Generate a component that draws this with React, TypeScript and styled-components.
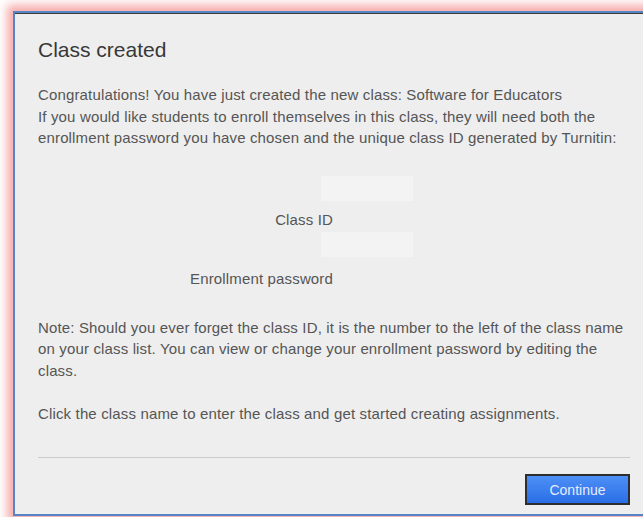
import React from "react";
import styled, { createGlobalStyle } from "styled-components";

const GlobalStyle = createGlobalStyle`
    html, body {
        margin: 0;
        padding: 0;
        background: #ffffff;
        overflow: hidden;
    }
    body {
        font-family: "Liberation Sans", Arial, sans-serif;
    }
`;

/**
 * Dialog frame
 */
const Page = styled.div`
    padding: 11px 0 0 13px;
    height: 517px;
    box-sizing: border-box;
`;

const Dialog = styled.div`
    width: 592px;
    padding: 25px 23px 9px 23px;
    background: #eeeeee;
    border: 2px solid #5685c6;
    box-shadow: inset 0 1px 0 #3c3c3c, 0 0 9px 6px rgba(243, 150, 150, 0.8);
    color: #555555;
`;

const Title = styled.h2`
    margin: 0 0 22px 0;
    font-size: 21px;
    line-height: 24px;
    font-weight: normal;
    color: #383838;
`;

const Text = styled.p`
    margin: 0;
    font-size: 15px;
    line-height: 21.5px;
    letter-spacing: 0.15px;
`;

/**
 * Class ID / password fields
 */
const Fields = styled.div`
    display: flex;
    flex-direction: column;
    margin: 27px 0 25px 0;
`;

const Field = styled.div<{ gap: number }>`
    display: flex;
    flex-direction: column;
    gap: ${(p) => p.gap}px;
    margin-bottom: 2px;
`;

const ValueBox = styled.div`
    width: 92px;
    height: 25px;
    margin-left: 283px;
    background: #f3f3f3;
`;

const FieldLabel = styled.div`
    width: 295px;
    text-align: right;
    font-size: 15px;
    line-height: 21.5px;
    letter-spacing: 0.15px;
`;

/**
 * Footer
 */
const Divider = styled.hr`
    margin: 33px 0 16px 0;
    border: 0;
    border-top: 1px solid #cccccc;
`;

const Footer = styled.div`
    display: flex;
    justify-content: flex-end;
`;

const ContinueButton = styled.button`
    width: 105px;
    height: 31px;
    border: 2px solid #2e2e2e;
    background: linear-gradient(#4e90f6, #2a6ee6);
    color: #e4ecff;
    font-family: "Liberation Sans", Arial, sans-serif;
    font-size: 14px;
    padding: 0;
    cursor: pointer;
`;

export default function App() {
    return (
        <Page>
            <GlobalStyle />
            <Dialog>
                <Title>Class created</Title>
                <Text>
                    Congratulations! You have just created the new class: Software for Educators
                    <br />
                    If you would like students to enroll themselves in this class, they will need both the
                    enrollment password you have chosen and the unique class ID generated by Turnitin:
                </Text>
                <Fields>
                    <Field gap={8}>
                        <ValueBox />
                        <FieldLabel>Class ID</FieldLabel>
                    </Field>
                    <Field gap={11}>
                        <ValueBox />
                        <FieldLabel>Enrollment password</FieldLabel>
                    </Field>
                </Fields>
                <Text>
                    Note: Should you ever forget the class ID, it is the number to the left of the class name
                    on your class list. You can view or change your enrollment password by editing the
                    class.
                    <br />
                    <br />
                    Click the class name to enter the class and get started creating assignments.
                </Text>
                <Divider />
                <Footer>
                    <ContinueButton>Continue</ContinueButton>
                </Footer>
            </Dialog>
        </Page>
    );
}
